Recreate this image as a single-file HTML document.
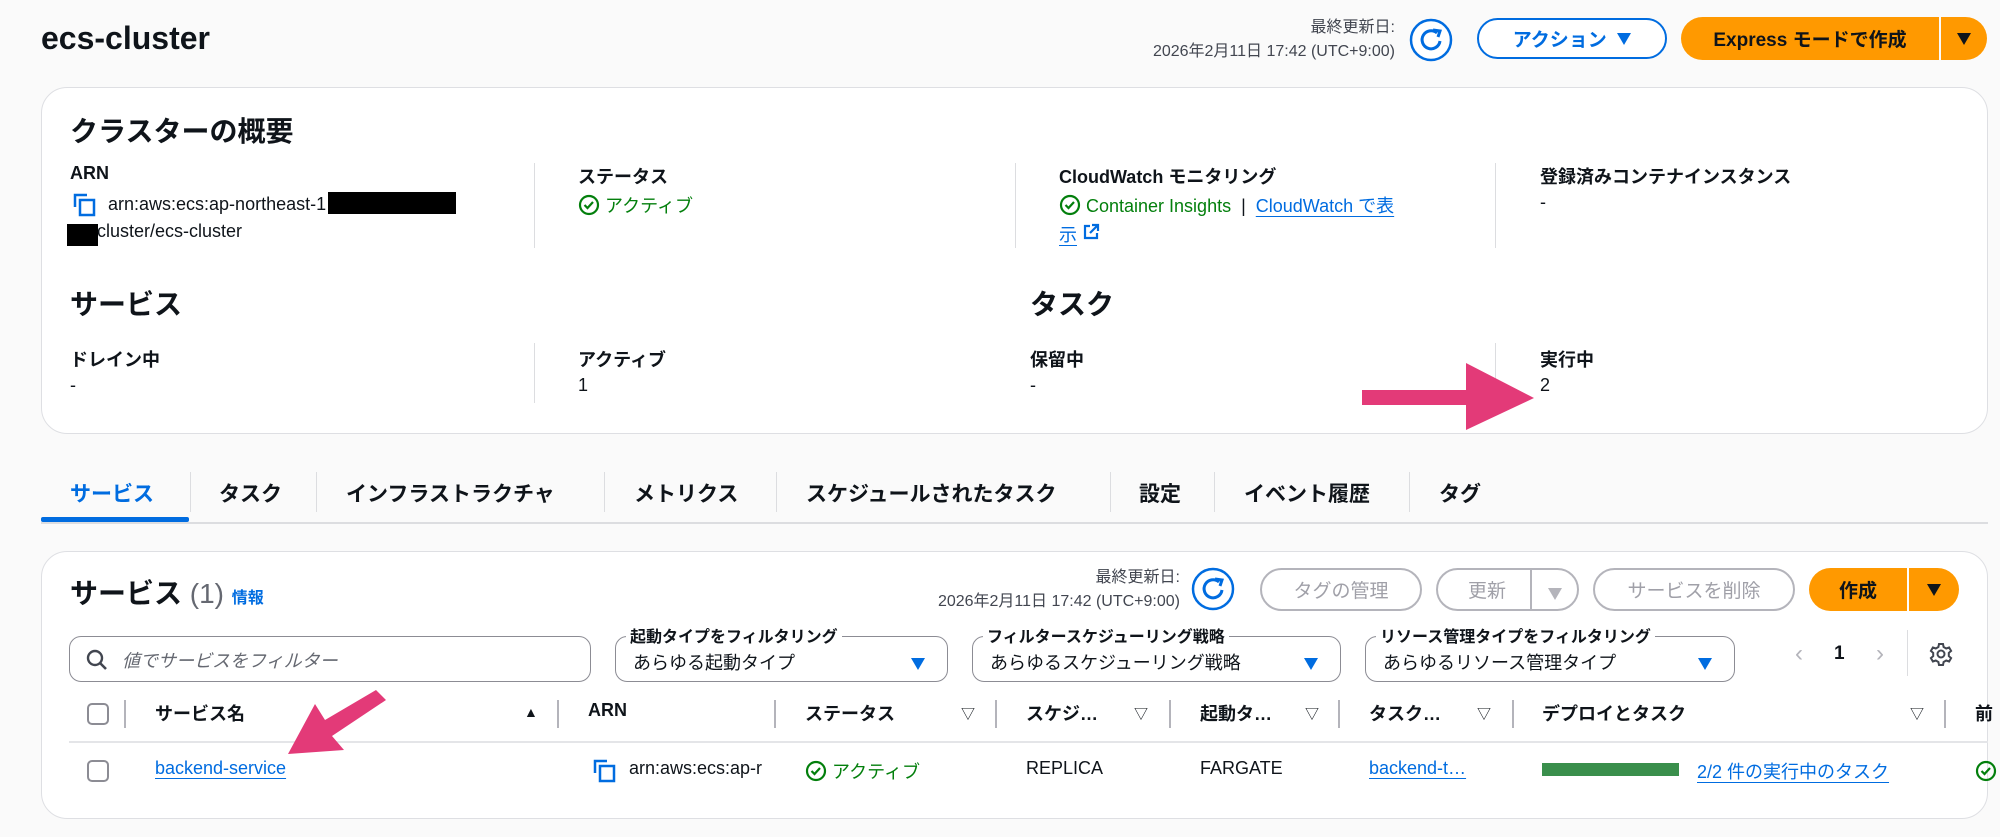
<!DOCTYPE html>
<html><head><meta charset="utf-8"><style>
*{box-sizing:border-box;margin:0;padding:0}
body{width:2000px;height:837px;background:#fafafa;font-family:"Liberation Sans","Noto Sans CJK JP",sans-serif;color:#0f141a;font-size:18px;position:relative;overflow:hidden}
.a{position:absolute;white-space:nowrap}
.card{position:absolute;background:#fff;border:1.5px solid #dedfe3;border-radius:26px}
.b{font-weight:bold}
.lnk{color:#006ce0;text-decoration:underline;text-underline-offset:4px}
.g{color:#037f0c}
.vd{position:absolute;width:1px;background:#dcdde0}
.btn{position:absolute;border-radius:24px;display:flex;align-items:center;justify-content:center;font-weight:bold;font-size:19px}
.sel{position:absolute;border:1.5px solid #8c8c94;border-radius:12px;background:#fff}
.lab{position:absolute;font-weight:bold;font-size:16px;background:#fff;padding:0 4px;top:-14px;left:10px}
.tri{display:inline-block;width:0;height:0;border-left:7px solid transparent;border-right:7px solid transparent;border-top:12px solid #006ce0}
.hd{position:absolute;top:700px;font-weight:bold;font-size:18px}
.cd{position:absolute;top:700px;width:2px;height:28px;background:#b4b4bb}
.sv{position:absolute;top:704px;font-size:14px;color:#0f141a}
.dis{border:2px solid #b4b4bb;color:#a0a0a8;background:#fff;font-weight:normal}
</style></head><body>

<div class="a b" style="left:41px;top:20px;font-size:32px">ecs-cluster</div>

<div class="a" style="right:605px;top:16px;font-size:16px;color:#424650;text-align:right;line-height:24px">最終更新日:<br>2026年2月11日 17:42 (UTC+9:00)</div>
<svg class="a" style="left:1409px;top:18px" width="44" height="44" viewBox="0 0 44 44"><circle cx="22" cy="22" r="20" fill="#fff" stroke="#006ce0" stroke-width="2.5"/><path d="M28 15 A9 9 0 1 0 31 23" fill="none" stroke="#006ce0" stroke-width="3"/><path d="M24 12 L31 13 L29 19" fill="none" stroke="#006ce0" stroke-width="3"/></svg>
<div class="btn" style="left:1477px;top:18px;width:190px;height:41px;border:2.5px solid #006ce0;color:#006ce0;background:#fff">アクション&nbsp;&nbsp;<span class="tri"></span></div>
<div class="btn" style="left:1681px;top:17px;width:258px;height:43px;background:#ff9900;border-radius:24px 0 0 24px;color:#0f141a">Express モードで作成</div>
<div class="btn" style="left:1941px;top:17px;width:46px;height:43px;background:#ff9900;border-radius:0 24px 24px 0"><span class="tri" style="border-top-color:#0f141a"></span></div>

<div class="card" style="left:41px;top:87px;width:1947px;height:347px"></div>
<div class="a b" style="left:70px;top:110px;font-size:28px">クラスターの概要</div>
<div class="vd" style="left:534px;top:163px;height:85px"></div>
<div class="vd" style="left:1015px;top:163px;height:85px"></div>
<div class="vd" style="left:1495px;top:163px;height:85px"></div>
<div class="a b" style="left:70px;top:163px">ARN</div>
<svg class="a" style="left:73px;top:193px" width="24" height="24" viewBox="0 0 24 24"><path d="M2 14V2h12" fill="none" stroke="#006ce0" stroke-width="2.5"/><rect x="7" y="7" width="14" height="15" fill="none" stroke="#006ce0" stroke-width="2.5"/></svg>
<div class="a" style="left:108px;top:192px">arn:aws:ecs:ap-northeast-1<span style="display:inline-block;width:128px;height:22px;background:#000;vertical-align:-4px;margin-left:2px"></span></div>
<div class="a" style="left:67px;top:224px;width:31px;height:22px;background:#000"></div>
<div class="a" style="left:97px;top:221px">cluster/ecs-cluster</div>
<div class="a b" style="left:578px;top:163px">ステータス</div>
<div class="a g" style="left:578px;top:192px"><svg width="22" height="22" viewBox="0 0 22 22" style="vertical-align:-4px"><circle cx="11" cy="11" r="9" fill="none" stroke="#037f0c" stroke-width="2.2"/><path d="M6.5 11l3 3 5.5-6" fill="none" stroke="#037f0c" stroke-width="2.2"/></svg> アクティブ</div>
<div class="a b" style="left:1059px;top:163px">CloudWatch モニタリング</div>
<div class="a" style="left:1059px;top:192px"><span class="g"><svg width="22" height="22" viewBox="0 0 22 22" style="vertical-align:-4px"><circle cx="11" cy="11" r="9" fill="none" stroke="#037f0c" stroke-width="2.2"/><path d="M6.5 11l3 3 5.5-6" fill="none" stroke="#037f0c" stroke-width="2.2"/></svg> Container Insights</span> &nbsp;| &nbsp;<span class="lnk">CloudWatch で表</span></div>
<div class="a" style="left:1059px;top:221px"><span class="lnk">示</span> <svg width="18" height="18" viewBox="0 0 18 18"><path d="M8 3H3v12h12v-5M10 2h6v6M16 2L8 10" fill="none" stroke="#006ce0" stroke-width="2.2"/></svg></div>
<div class="a b" style="left:1540px;top:163px">登録済みコンテナインスタンス</div>
<div class="a" style="left:1540px;top:192px">-</div>

<div class="a b" style="left:70px;top:283px;font-size:28px">サービス</div>
<div class="a b" style="left:1030px;top:283px;font-size:28px">タスク</div>
<div class="vd" style="left:534px;top:343px;height:60px"></div>
<div class="vd" style="left:1495px;top:343px;height:60px"></div>
<div class="a b" style="left:70px;top:346px">ドレイン中</div><div class="a" style="left:70px;top:375px">-</div>
<div class="a b" style="left:578px;top:346px">アクティブ</div><div class="a" style="left:578px;top:375px">1</div>
<div class="a b" style="left:1030px;top:346px">保留中</div><div class="a" style="left:1030px;top:375px">-</div>
<div class="a b" style="left:1540px;top:346px">実行中</div><div class="a" style="left:1540px;top:375px">2</div>
<svg class="a" style="left:1360px;top:360px" width="180" height="70" viewBox="0 0 180 70"><path d="M2 30h104V3l68 35-68 32V45H2z" fill="#e33a78"/></svg>

<div style="position:absolute;left:41px;top:522px;width:1947px;height:2px;background:#dcdde0"></div>
<div style="position:absolute;left:41px;top:517px;width:148px;height:5px;background:#006ce0;border-radius:2px"></div>
<div class="a b" style="left:70px;top:478px;font-size:21px;color:#006ce0">サービス</div>
<div class="a b" style="left:219px;top:478px;font-size:21px">タスク</div>
<div class="a b" style="left:346px;top:478px;font-size:21px">インフラストラクチャ</div>
<div class="a b" style="left:634px;top:478px;font-size:21px">メトリクス</div>
<div class="a b" style="left:806px;top:478px;font-size:21px">スケジュールされたタスク</div>
<div class="a b" style="left:1139px;top:478px;font-size:21px">設定</div>
<div class="a b" style="left:1244px;top:478px;font-size:21px">イベント履歴</div>
<div class="a b" style="left:1439px;top:478px;font-size:21px">タグ</div>
<div class="vd" style="left:190px;top:472px;height:40px"></div><div class="vd" style="left:316px;top:472px;height:40px"></div><div class="vd" style="left:604px;top:472px;height:40px"></div><div class="vd" style="left:776px;top:472px;height:40px"></div><div class="vd" style="left:1110px;top:472px;height:40px"></div><div class="vd" style="left:1214px;top:472px;height:40px"></div><div class="vd" style="left:1409px;top:472px;height:40px"></div>

<div class="card" style="left:41px;top:551px;width:1947px;height:268px"></div>
<div class="a b" style="left:70px;top:572px;font-size:28px">サービス <span style="font-weight:normal;color:#656871">(1)</span> <span style="font-size:16px;color:#006ce0">情報</span></div>
<div class="a" style="right:820px;top:566px;font-size:16px;color:#424650;text-align:right;line-height:24px">最終更新日:<br>2026年2月11日 17:42 (UTC+9:00)</div>
<svg class="a" style="left:1191px;top:567px" width="44" height="44" viewBox="0 0 44 44"><circle cx="22" cy="22" r="20" fill="#fff" stroke="#006ce0" stroke-width="2.5"/><path d="M28 15 A9 9 0 1 0 31 23" fill="none" stroke="#006ce0" stroke-width="3"/><path d="M24 12 L31 13 L29 19" fill="none" stroke="#006ce0" stroke-width="3"/></svg>
<div class="btn dis" style="left:1260px;top:568px;width:162px;height:43px">タグの管理</div>
<div class="btn dis" style="left:1436px;top:568px;width:143px;height:43px;justify-content:flex-start;padding-left:30px">更新</div>
<div class="a" style="left:1530px;top:570px;width:2px;height:39px;background:#b4b4bb"></div>
<div class="a" style="left:1548px;top:584px"><span class="tri" style="border-top-color:#b4b4bb"></span></div>
<div class="btn dis" style="left:1593px;top:568px;width:202px;height:43px">サービスを削除</div>
<div class="btn" style="left:1809px;top:568px;width:98px;height:43px;background:#ff9900;border-radius:24px 0 0 24px">作成</div>
<div class="btn" style="left:1909px;top:568px;width:50px;height:43px;background:#ff9900;border-radius:0 24px 24px 0"><span class="tri" style="border-top-color:#0f141a"></span></div>

<div class="sel" style="left:69px;top:636px;width:522px;height:46px"><svg class="a" style="left:16px;top:12px" width="22" height="22" viewBox="0 0 22 22"><circle cx="9" cy="9" r="7" fill="none" stroke="#424650" stroke-width="2.4"/><path d="M14 14l6 6" stroke="#424650" stroke-width="2.6"/></svg><div class="a" style="left:52px;top:10px;font-style:italic;color:#656871">値でサービスをフィルター</div></div>
<div class="sel" style="left:615px;top:636px;width:333px;height:46px"><div class="lab">起動タイプをフィルタリング</div><div class="a" style="left:17px;top:12px">あらゆる起動タイプ</div><div class="a" style="right:22px;top:17px"><span class="tri"></span></div></div>
<div class="sel" style="left:972px;top:636px;width:369px;height:46px"><div class="lab">フィルタースケジューリング戦略</div><div class="a" style="left:17px;top:12px">あらゆるスケジューリング戦略</div><div class="a" style="right:22px;top:17px"><span class="tri"></span></div></div>
<div class="sel" style="left:1365px;top:636px;width:370px;height:46px"><div class="lab">リソース管理タイプをフィルタリング</div><div class="a" style="left:17px;top:12px">あらゆるリソース管理タイプ</div><div class="a" style="right:22px;top:17px"><span class="tri"></span></div></div>
<div class="a" style="left:1795px;top:640px;font-size:24px;color:#b4b4bb">‹</div>
<div class="a b" style="left:1834px;top:643px;font-size:19px">1</div>
<div class="a" style="left:1876px;top:640px;font-size:24px;color:#b4b4bb">›</div>
<div class="vd" style="left:1907px;top:630px;height:46px"></div>
<svg class="a" style="left:1929px;top:642px" width="24" height="24" viewBox="0 0 24 24"><circle cx="12" cy="12" r="3.5" fill="none" stroke="#424650" stroke-width="2"/><path d="M10 2h4l.6 3 2.6 1.5 2.9-1 2 3.4-2.3 2v3.2l2.3 2-2 3.4-2.9-1-2.6 1.5-.6 3h-4l-.6-3-2.6-1.5-2.9 1-2-3.4 2.3-2v-3.2l-2.3-2 2-3.4 2.9 1L9.4 5z" fill="none" stroke="#424650" stroke-width="2"/></svg>

<div class="a" style="left:87px;top:703px;width:22px;height:22px;border:2px solid #8c8c94;border-radius:5px"></div>
<div class="cd" style="left:124px"></div>
<div class="hd" style="left:155px">サービス名</div><div class="a" style="left:524px;top:704px;font-size:14px">▲</div>
<div class="cd" style="left:557px"></div>
<div class="hd" style="left:588px">ARN</div><div class="cd" style="left:774px"></div>
<div class="hd" style="left:805px">ステータス</div><div class="sv" style="left:961px">▽</div><div class="cd" style="left:995px"></div>
<div class="hd" style="left:1026px">スケジ…</div><div class="sv" style="left:1134px">▽</div><div class="cd" style="left:1169px"></div>
<div class="hd" style="left:1200px">起動タ…</div><div class="sv" style="left:1305px">▽</div><div class="cd" style="left:1338px"></div>
<div class="hd" style="left:1369px">タスク…</div><div class="sv" style="left:1477px">▽</div><div class="cd" style="left:1512px"></div>
<div class="hd" style="left:1542px">デプロイとタスク</div><div class="sv" style="left:1910px">▽</div><div class="cd" style="left:1944px"></div>
<div class="hd" style="left:1975px">前</div>
<div class="a" style="left:69px;top:741px;width:1919px;height:2px;background:#e4e5e8"></div>

<div class="a" style="left:87px;top:760px;width:22px;height:22px;border:2px solid #8c8c94;border-radius:5px"></div>
<div class="a lnk" style="left:155px;top:758px">backend-service</div>
<svg class="a" style="left:593px;top:759px" width="24" height="24" viewBox="0 0 24 24"><path d="M2 14V2h12" fill="none" stroke="#006ce0" stroke-width="2.5"/><rect x="7" y="7" width="14" height="15" fill="none" stroke="#006ce0" stroke-width="2.5"/></svg>
<div class="a" style="left:629px;top:758px">arn:aws:ecs:ap-r</div>
<div class="a g" style="left:805px;top:758px"><svg width="22" height="22" viewBox="0 0 22 22" style="vertical-align:-4px"><circle cx="11" cy="11" r="9" fill="none" stroke="#037f0c" stroke-width="2.2"/><path d="M6.5 11l3 3 5.5-6" fill="none" stroke="#037f0c" stroke-width="2.2"/></svg> アクティブ</div>
<div class="a" style="left:1026px;top:758px">REPLICA</div>
<div class="a" style="left:1200px;top:758px">FARGATE</div>
<div class="a lnk" style="left:1369px;top:758px">backend-t…</div>
<div class="a" style="left:1542px;top:763px;width:137px;height:13px;background:#3a8f4c"></div>
<div class="a lnk" style="left:1697px;top:758px">2/2 件の実行中のタスク</div>
<svg class="a" style="left:1975px;top:760px" width="22" height="22" viewBox="0 0 22 22"><circle cx="11" cy="11" r="9" fill="none" stroke="#037f0c" stroke-width="2.2"/><path d="M6.5 11l3 3 5.5-6" fill="none" stroke="#037f0c" stroke-width="2.2"/></svg>

<svg class="a" style="left:280px;top:690px" width="110" height="70" viewBox="0 0 110 70"><path d="M106 10L96 0 45 30 35 14 8 64 64 60 52 46z" fill="#e33a78"/></svg>
</body></html>
